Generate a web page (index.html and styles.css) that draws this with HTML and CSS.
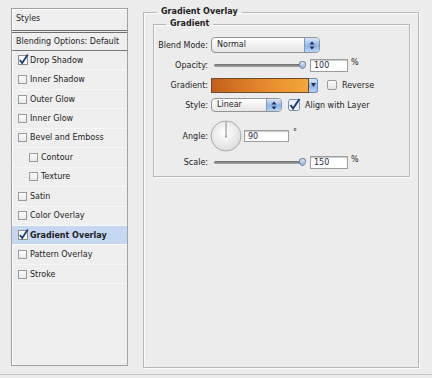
FILE: index.html
```html
<!DOCTYPE html>
<html>

<head>
  <meta charset="utf-8">
  <link rel="stylesheet" href="styles.css">
</head>

<body>

  <div class="dialog">
    <div class="styles-list">
      <div class="list-title">Styles</div>
      <div class="list-blend">Blending Options: Default</div>
      <div class="list-item">
        <svg class="cb-on" width="10" height="10" viewBox="0 0 10 10"><rect x="0.5" y="0.5" width="9" height="9" fill="#fafafa" stroke="#8c8c8c"/><path d="M1.8 5 L4.2 8 L9.8 -0.5" fill="none" stroke="#1c3b7c" stroke-width="1.8"/></svg>
        Drop Shadow
      </div>
      <div class="list-item"><span class="cb"></span>Inner Shadow</div>
      <div class="list-item"><span class="cb"></span>Outer Glow</div>
      <div class="list-item"><span class="cb"></span>Inner Glow</div>
      <div class="list-item"><span class="cb"></span>Bevel and Emboss</div>
      <div class="list-item sub"><span class="cb"></span>Contour</div>
      <div class="list-item sub"><span class="cb"></span>Texture</div>
      <div class="list-item"><span class="cb"></span>Satin</div>
      <div class="list-item"><span class="cb"></span>Color Overlay</div>
      <div class="list-item selected">
        <svg class="cb-on" width="10" height="10" viewBox="0 0 10 10"><rect x="0.5" y="0.5" width="9" height="9" fill="#fafafa" stroke="#8c8c8c"/><path d="M1.8 5 L4.2 8 L9.8 -0.5" fill="none" stroke="#1c3b7c" stroke-width="1.8"/></svg>
        Gradient Overlay
      </div>
      <div class="list-item"><span class="cb"></span>Pattern Overlay</div>
      <div class="list-item"><span class="cb"></span>Stroke</div>
    </div>

    <fieldset class="effect">
      <legend>Gradient Overlay</legend>
      <fieldset class="group">
        <legend>Gradient</legend>

        <div class="row">
          <label>Blend Mode:</label>
          <div class="select wide">
            <span class="select-text">Normal</span>
            <span class="stepper"><svg width="6" height="9" viewBox="0 0 6 9"><path d="M0.5 3.5 L3 0.5 L5.5 3.5 Z M0.5 5.5 L3 8.5 L5.5 5.5 Z" fill="#1d2d55"/></svg></span>
          </div>
        </div>

        <div class="row">
          <label>Opacity:</label>
          <div class="slider"><span class="track"></span><span class="thumb"></span></div>
          <input class="num" type="text" value="100">
          <span class="unit">%</span>
        </div>

        <div class="row">
          <label>Gradient:</label>
          <div class="swatch"></div>
          <span class="swatch-drop"><svg width="5" height="4" viewBox="0 0 5 4"><path d="M0 0 L5 0 L2.5 4 Z" fill="#1d2d55"/></svg></span>
          <span class="box"></span>
          <span class="box-label">Reverse</span>
        </div>

        <div class="row">
          <label>Style:</label>
          <div class="select narrow">
            <span class="select-text">Linear</span>
            <span class="stepper"><svg width="6" height="9" viewBox="0 0 6 9"><path d="M0.5 3.5 L3 0.5 L5.5 3.5 Z M0.5 5.5 L3 8.5 L5.5 5.5 Z" fill="#1d2d55"/></svg></span>
          </div>
          <svg class="box-on" width="12" height="12" viewBox="0 0 12 12"><rect x="0.5" y="0.5" width="11" height="11" rx="2" fill="#eef3fb" stroke="#7d8fb0"/><path d="M2.5 6 L5 9.5 L11.5 0" fill="none" stroke="#1c3b7c" stroke-width="2"/></svg>
          <span class="box-label">Align with Layer</span>
        </div>

        <div class="row tall">
          <label>Angle:</label>
          <svg class="dial" width="32" height="32" viewBox="0 0 32 32">
            <defs>
              <radialGradient id="dialFill" cx="45%" cy="40%" r="60%">
                <stop offset="0" stop-color="#ffffff"/>
                <stop offset="1" stop-color="#dedede"/>
              </radialGradient>
            </defs>
            <circle cx="16" cy="16" r="15" fill="url(#dialFill)" stroke="#a9a9a9"/>
            <line x1="16" y1="16.5" x2="16" y2="2" stroke="#8a8a8a" stroke-width="1"/>
            <circle cx="16" cy="16.5" r="0.9" fill="#8a8a8a"/>
          </svg>
          <input class="num angle" type="text" value="90">
          <span class="degree">°</span>
        </div>

        <div class="row">
          <label>Scale:</label>
          <div class="slider"><span class="track"></span><span class="thumb"></span></div>
          <input class="num" type="text" value="150">
          <span class="unit">%</span>
        </div>
      </fieldset>
    </fieldset>
  </div>

</body>

</html>
```

FILE: styles.css
```css
body {
  margin: 0;
  background: #ececec;
  font-family: "DejaVu Sans", sans-serif;
  font-size: 8px;
  color: #222;
}

.dialog {
  display: flex;
  align-items: flex-start;
  height: 375px;
  box-sizing: border-box;
  padding: 6px 0 0 11px;
  border-bottom: 1px solid #c4c4c4;
}

/* left list */
.styles-list {
  width: 117px;
  height: 358px;
  margin-top: 2px;
  box-sizing: border-box;
  border: 1px solid #a2a2a2;
  box-shadow: inset 1px 1px 0 #fff;
  background: #efefef;
}

.list-title {
  height: 21px;
  line-height: 19px;
  padding-left: 4px;
  box-sizing: border-box;
  border-bottom: 3px double #6f6f6f;
  height: 24px;
}

.list-blend {
  height: 18px;
  line-height: 17px;
  padding-left: 4px;
  box-sizing: border-box;
  border-bottom: 1px solid #7a7a7a;
}

.list-item {
  height: 19.45px;
  box-sizing: border-box;
  display: flex;
  align-items: center;
  padding-left: 6px;
  border-bottom: 1px solid #f7f7f7;
}

.list-item.sub {
  padding-left: 17px;
}

.list-item.selected {
  background: #c6d8f1;
  font-weight: bold;
}

.cb {
  width: 9px;
  height: 9px;
  box-sizing: border-box;
  border: 1px solid #9a9a9a;
  background: linear-gradient(#fdfdfd, #e9e9e9);
  margin-right: 3px;
}

.cb-on {
  overflow: visible;
  margin-right: 2px;
}

/* right side */
fieldset {
  margin: 0;
  border: 1px solid #b6b6b6;
  box-shadow: 1px 1px 0 #fafafa, inset 1px 1px 0 #fafafa;
}

legend {
  font-weight: bold;
  line-height: 12px;
  padding: 0 4px;
}

.effect {
  margin-left: 15px;
  width: 276px;
  height: 362px;
  box-sizing: border-box;
  padding: 0 8px 0 9px;
}

.effect > legend {
  margin-left: 4px;
}

.group {
  width: 257px;
  box-sizing: border-box;
  padding: 5px 0 4px 0;
}

.group > legend {
  margin-left: 12px;
}

.row {
  display: flex;
  align-items: center;
  height: 20px;
}

.row.tall {
  height: 30px;
  padding: 6px 0 1px;
}

.row label {
  width: 54px;
  margin-right: 3px;
  text-align: right;
}

.select {
  display: flex;
  height: 16px;
  box-sizing: border-box;
  border: 1px solid #949494;
  border-radius: 4px;
  background: linear-gradient(#ffffff, #e6e6e6);
  overflow: hidden;
}

.select.wide {
  width: 109px;
}

.select.narrow {
  width: 71px;
  height: 14px;
}

.select-text {
  flex: 1;
  padding-left: 5px;
  line-height: 14px;
}

.select.narrow .select-text {
  line-height: 12px;
}

.stepper {
  width: 14px;
  display: flex;
  align-items: center;
  justify-content: center;
  border-left: 1px solid #7c98c4;
  background: linear-gradient(#d9e7f9, #8db4ea 55%, #b9d3f6);
}

.slider {
  position: relative;
  width: 95px;
  height: 10px;
}

.track {
  position: absolute;
  left: 3px;
  right: 3px;
  top: 4px;
  height: 3px;
  border-radius: 2px;
  background: linear-gradient(#6d6d6d, #a9a9a9);
}

.thumb {
  position: absolute;
  right: 0;
  top: 1px;
  width: 7px;
  height: 8px;
  border-radius: 50% 50% 50% 50% / 40% 40% 60% 60%;
  border: 1px solid #6f86ad;
  box-sizing: border-box;
  background: linear-gradient(#e6effb, #8aaee0);
}

.num {
  width: 38px;
  height: 13px;
  box-sizing: border-box;
  margin: 0 0 0 4px;
  padding: 0 0 0 3px;
  border: 1px solid #9d9d9d;
  box-shadow: inset 0 1px 1px #c9c9c9;
  background: #fff;
  font-family: "DejaVu Sans", sans-serif;
  font-size: 8px;
  color: #1f2a44;
}

.num.angle {
  width: 45px;
  height: 12px;
  margin-left: 2px;
}

.unit {
  margin-left: 3px;
  align-self: flex-start;
  margin-top: 3px;
}

.degree {
  margin-left: 4px;
  align-self: flex-start;
  margin-top: 7px;
}

.swatch {
  width: 98px;
  height: 15px;
  box-sizing: border-box;
  border: 1px solid #6b4b2b;
  background: linear-gradient(90deg, #c3601c, #e3862a 50%, #f4a83c);
}

.swatch-drop {
  width: 9px;
  height: 15px;
  box-sizing: border-box;
  display: flex;
  align-items: center;
  justify-content: center;
  border: 1px solid #6f88b3;
  border-left: none;
  border-radius: 0 3px 3px 0;
  background: linear-gradient(#d9e7f9, #8db4ea 55%, #b9d3f6);
}

.box {
  width: 10px;
  height: 10px;
  box-sizing: border-box;
  margin-left: 9px;
  border: 1px solid #9a9a9a;
  border-radius: 2px;
  background: linear-gradient(#fefefe, #e6e6e6);
}

.box-on {
  overflow: visible;
  margin-left: 6px;
}

.box-label {
  margin-left: 5px;
}

.dial {
  margin-left: -1px;
}
```
